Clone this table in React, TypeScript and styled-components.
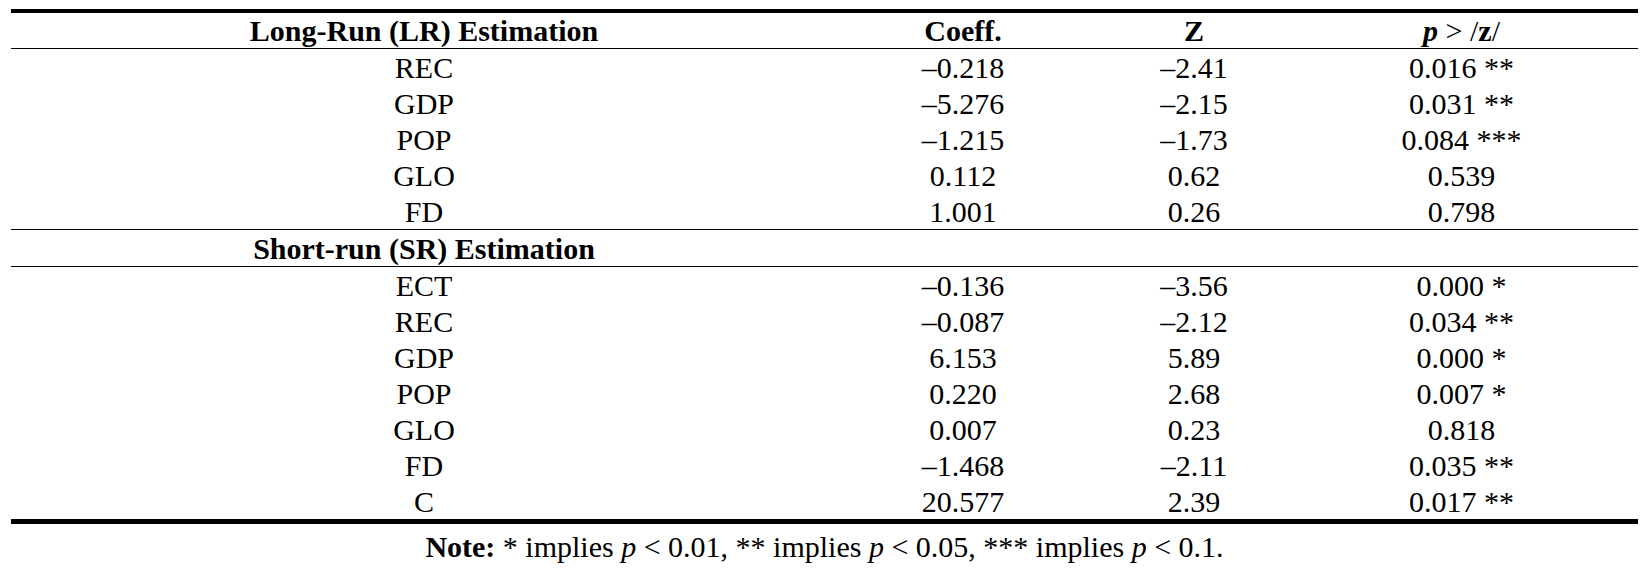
import styled, {createGlobalStyle} from "styled-components";

const GlobalStyle = createGlobalStyle`
    body {
        margin: 0;
        background: #ffffff;
        font-family: "Liberation Serif", "Times New Roman", serif;
        color: #000000;
    }
`;

type Row = {
    name: string
    coeff: string
    z: string
    p: string
}

const longRun: Row[] = [
    {name: "REC", coeff: "–0.218", z: "–2.41", p: "0.016 **"},
    {name: "GDP", coeff: "–5.276", z: "–2.15", p: "0.031 **"},
    {name: "POP", coeff: "–1.215", z: "–1.73", p: "0.084 ***"},
    {name: "GLO", coeff: "0.112", z: "0.62", p: "0.539"},
    {name: "FD", coeff: "1.001", z: "0.26", p: "0.798"},
];

const shortRun: Row[] = [
    {name: "ECT", coeff: "–0.136", z: "–3.56", p: "0.000 *"},
    {name: "REC", coeff: "–0.087", z: "–2.12", p: "0.034 **"},
    {name: "GDP", coeff: "6.153", z: "5.89", p: "0.000 *"},
    {name: "POP", coeff: "0.220", z: "2.68", p: "0.007 *"},
    {name: "GLO", coeff: "0.007", z: "0.23", p: "0.818"},
    {name: "FD", coeff: "–1.468", z: "–2.11", p: "0.035 **"},
    {name: "C", coeff: "20.577", z: "2.39", p: "0.017 **"},
];

function App() {
    const renderRows = (rows: Row[]) =>
        rows.map((r, i) => (
            <StyledRow key={r.name + i} $rule={i === rows.length - 1}>
                <Cell>{r.name}</Cell>
                <Cell>{r.coeff}</Cell>
                <Cell>{r.z}</Cell>
                <LastCell>{r.p}</LastCell>
            </StyledRow>
        ));

    return (
        <>
            <GlobalStyle/>
            <Page>
                <Table>
                    <HeadRow>
                        <HeadCell>Long-Run (LR) Estimation</HeadCell>
                        <HeadCell>Coeff.</HeadCell>
                        <HeadCell>Z</HeadCell>
                        <HeadLast><i>p</i> <Plain>&gt; /</Plain>z<Plain>/</Plain></HeadLast>
                    </HeadRow>
                    {renderRows(longRun)}
                    <StyledRow $rule>
                        <HeadCell>Short-run (SR) Estimation</HeadCell>
                        <Cell/>
                        <Cell/>
                        <LastCell/>
                    </StyledRow>
                    {renderRows(shortRun)}
                </Table>
                <Note><b>Note:</b> * implies <i>p</i> &lt; 0.01, ** implies <i>p</i> &lt; 0.05, *** implies <i>p</i> &lt; 0.1.</Note>
            </Page>
        </>
    );
}

export default App;


const Page = styled.div`
    padding: 9px 11px 0 11px;
    width: 1649px;
    box-sizing: border-box;
`;

const Table = styled.div`
    border-top: 4px solid #000;
    border-bottom: 4px solid #000;
`;

const grid = `
    display: grid;
    grid-template-columns: 826px 252px 210px 1fr;
`;

const HeadRow = styled.div`
    ${grid};
    height: 36px;
    box-sizing: border-box;
    border-bottom: 1px solid #000;
    font-size: 30px;
    line-height: 35px;
    font-weight: bold;
`;

const StyledRow = styled.div<{ $rule?: boolean }>`
    ${grid};
    height: ${p => (p.$rule ? 37 : 36)}px;
    box-sizing: border-box;
    border-bottom: ${p => (p.$rule ? "1px solid #000" : "none")};
    font-size: 30px;
    line-height: 31px;
    padding-top: 3px;
`;

const Cell = styled.div`
    text-align: center;
    white-space: nowrap;
`;

const LastCell = styled(Cell)`
    padding-right: 14px;
`;

const HeadCell = styled(Cell)`
    font-weight: bold;
`;

const HeadLast = styled(LastCell)`
    font-weight: bold;
`;

const Plain = styled.span`
    font-weight: normal;
`;

const Note = styled.div`
    text-align: center;
    font-size: 30px;
    line-height: 34px;
    padding-top: 6px;
`;
